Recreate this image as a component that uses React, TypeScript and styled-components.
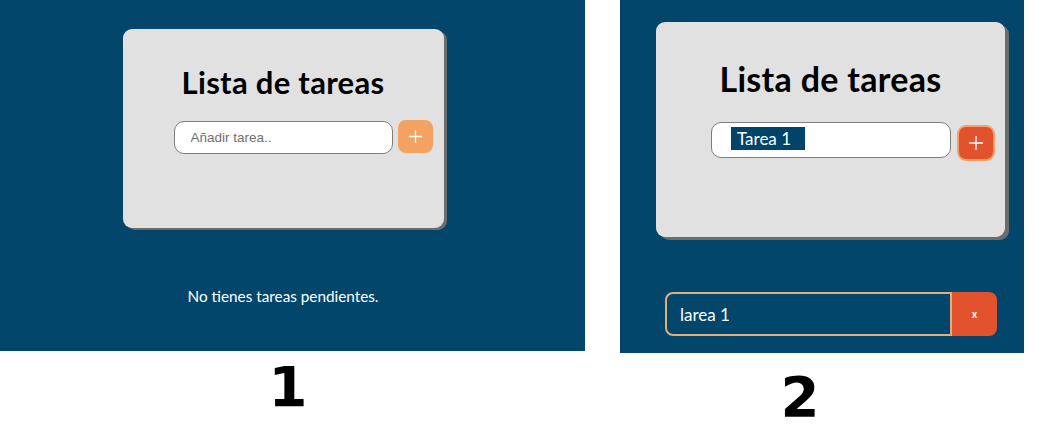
import React from "react";
import styled, { createGlobalStyle } from "styled-components";

const Global = createGlobalStyle`
  html, body { margin: 0; padding: 0; background: #ffffff; }
  body { font-family: Lato, "Open Sans", sans-serif; }
`;

const BLUE = "#03466b";

const Page = styled.div`
  display: flex;
  align-items: flex-start;
  gap: 35px;
  width: 1061px;
  height: 432px;
  overflow: hidden;
`;

const Column = styled.div<{ $w: number }>`
  display: flex;
  flex-direction: column;
  width: ${(p) => p.$w}px;
`;

const Screen = styled.div<{ $h: number; $pt: number; $pl: number; $pr: number; $center?: boolean }>`
  box-sizing: border-box;
  height: ${(p) => p.$h}px;
  background: ${BLUE};
  display: flex;
  flex-direction: column;
  align-items: ${(p) => (p.$center ? "center" : "flex-start")};
  padding: ${(p) => p.$pt}px ${(p) => p.$pr}px 0 ${(p) => p.$pl}px;
`;

const Card = styled.div<{ $w: number; $h: number; $pt: number; $shadow: number }>`
  box-sizing: border-box;
  width: ${(p) => p.$w}px;
  height: ${(p) => p.$h}px;
  background: #e1e1e1;
  border-radius: 9px;
  box-shadow: ${(p) => p.$shadow}px ${(p) => p.$shadow - 1}px 0 #6a6c6e;
  display: flex;
  flex-direction: column;
  align-items: center;
  padding-top: ${(p) => p.$pt}px;
`;

const Title = styled.h1<{ $size: number }>`
  margin: 0;
  font-family: Lato, sans-serif;
  font-weight: 700;
  font-size: ${(p) => p.$size}px;
  line-height: 1.2;
  color: #000;
  letter-spacing: 0.3px;
`;

const InputRow = styled.div<{ $pl: number; $mt: number; $gap: number }>`
  align-self: stretch;
  display: flex;
  align-items: flex-start;
  gap: ${(p) => p.$gap}px;
  padding-left: ${(p) => p.$pl}px;
  margin-top: ${(p) => p.$mt}px;
`;

const TextInput = styled.input<{ $w: number; $h: number }>`
  box-sizing: border-box;
  width: ${(p) => p.$w}px;
  height: ${(p) => p.$h}px;
  margin-top: 1px;
  border: 1px solid #7d7d7d;
  border-radius: 10px;
  background: #fff;
  padding: 0 0 0 16px;
  font-family: "Liberation Sans", Arial, sans-serif;
  font-size: 13.5px;
  outline: none;
  &::placeholder { color: #6f6f6f; }
`;

const FakeInput = styled.div<{ $w: number; $h: number }>`
  box-sizing: border-box;
  width: ${(p) => p.$w}px;
  height: ${(p) => p.$h}px;
  border: 1px solid #7d7d7d;
  border-radius: 10px;
  background: #fff;
  padding: 4px 0 0 19px;
  display: flex;
  align-items: flex-start;
`;

const Selected = styled.span`
  display: inline-block;
  width: 74px;
  height: 23px;
  background: #00446a;
  color: #fff;
  font-family: Lato, sans-serif;
  font-size: 17px;
  line-height: 23px;
  padding-left: 6px;
  box-sizing: border-box;
`;

const AddButton = styled.button<{ $variant: "idle" | "active" }>`
  box-sizing: border-box;
  display: flex;
  align-items: center;
  justify-content: center;
  padding: 0;
  cursor: pointer;
  ${(p) =>
    p.$variant === "idle"
      ? `width: 35px; height: 33px; background: #f3a262; border: none; border-radius: 8px;`
      : `width: 38px; height: 36px; margin-top: 3px; background: #e2532d; border: 2px solid #f4a06a; border-radius: 9px;`}
`;

const EmptyText = styled.p`
  margin: 59px 0 0;
  font-family: Lato, sans-serif;
  font-size: 15.3px;
  line-height: 18px;
  color: #ffffff;
`;

const TaskItem = styled.div`
  display: flex;
  margin: 55px 0 0 9px;
  width: 332px;
  height: 44px;
`;

const TaskText = styled.div`
  box-sizing: border-box;
  flex: 1;
  border: 2px solid #e3ae7e;
  border-radius: 8px 0 0 8px;
  display: flex;
  align-items: center;
  padding-left: 13px;
  color: #fff;
  font-family: Lato, sans-serif;
  font-size: 17px;
`;

const DeleteButton = styled.button`
  width: 45px;
  border: none;
  border-radius: 0 8px 8px 0;
  background: #e2532d;
  color: #fff;
  font-family: "Liberation Sans", Arial, sans-serif;
  font-weight: 700;
  font-size: 10px;
  padding: 0;
  cursor: pointer;
`;

const Label = styled.div<{ $mt: number; $pr: number }>`
  margin-top: ${(p) => p.$mt}px;
  padding-right: ${(p) => p.$pr}px;
  text-align: center;
  font-family: "DejaVu Sans", "Liberation Sans", sans-serif;
  font-weight: 700;
  font-size: 56px;
  line-height: 1;
  color: #000;
`;

const Plus = ({ size }: { size: number }) => (
  <svg width={size} height={size} viewBox="0 0 16 16">
    <path d="M8 1v14M1 8h14" stroke="#fff" strokeWidth="1.4" fill="none" />
  </svg>
);

export default function App() {
  return (
    <>
      <Global />
      <Page>
        <Column $w={585}>
          <Screen $h={351} $pt={29} $pl={0} $pr={19} $center>
            <Card $w={321} $h={199} $pt={35} $shadow={3}>
              <Title $size={31}>Lista de tareas</Title>
              <InputRow $pl={51} $mt={19} $gap={5}>
                <TextInput $w={219} $h={33} placeholder="Añadir tarea.." readOnly />
                <AddButton $variant="idle">
                  <Plus size={15} />
                </AddButton>
              </InputRow>
            </Card>
            <EmptyText>No tienes tareas pendientes.</EmptyText>
          </Screen>
          <Label $mt={8} $pr={9}>1</Label>
        </Column>
        <Column $w={404}>
          <Screen $h={353} $pt={22} $pl={36} $pr={0}>
            <Card $w={349} $h={215} $pt={37} $shadow={4}>
              <Title $size={34}>Lista de tareas</Title>
              <InputRow $pl={55} $mt={22} $gap={6}>
                <FakeInput $w={240} $h={36}>
                  <Selected>Tarea 1</Selected>
                </FakeInput>
                <AddButton $variant="active">
                  <Plus size={16} />
                </AddButton>
              </InputRow>
            </Card>
            <TaskItem>
              <TaskText>larea 1</TaskText>
              <DeleteButton>x</DeleteButton>
            </TaskItem>
          </Screen>
          <Label $mt={16} $pr={44}>2</Label>
        </Column>
      </Page>
    </>
  );
}
